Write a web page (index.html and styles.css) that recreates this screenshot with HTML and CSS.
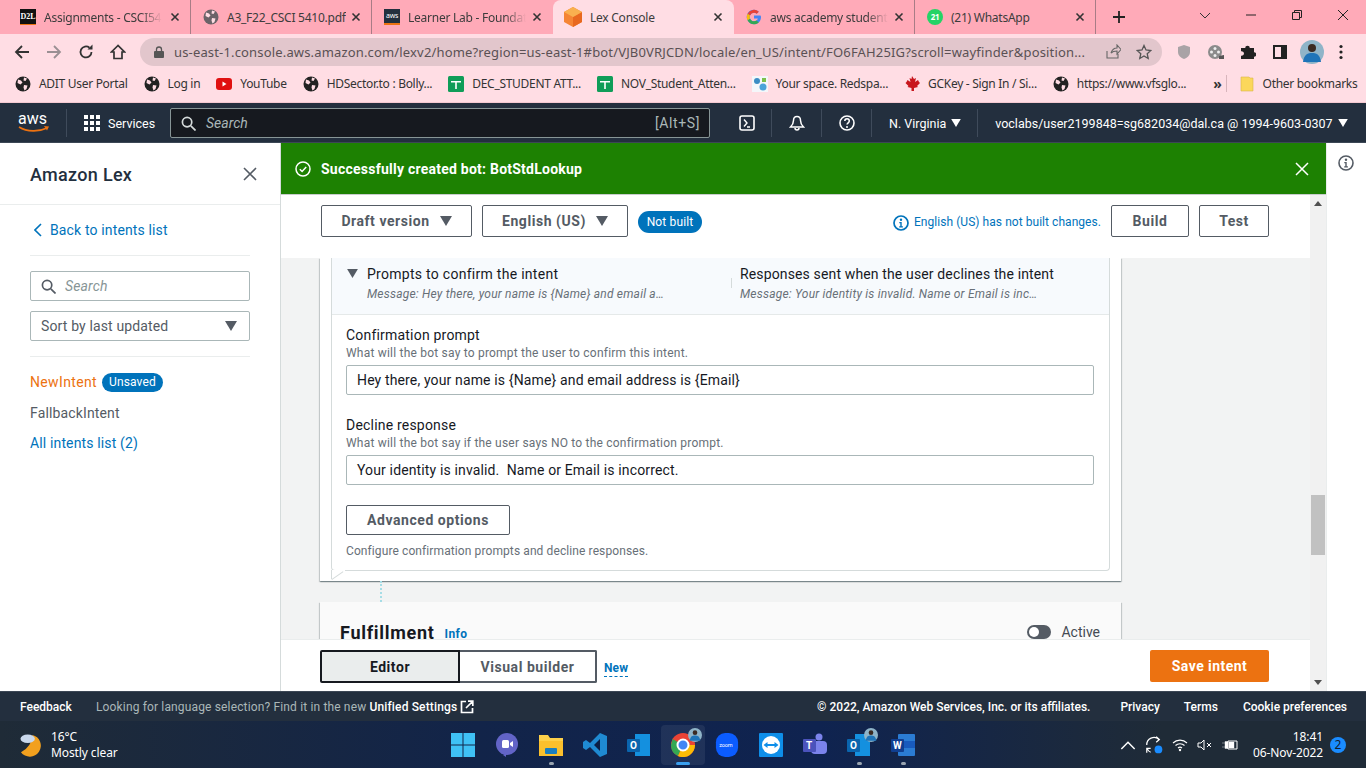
FILE: index.html
```html
<!DOCTYPE html>
<html lang="en">
<head>
    <meta charset="UTF-8">
    <title>Lex Console</title>
    <link rel="stylesheet" href="styles.css">
</head>
<body>
    <svg class="defs" width="0" height="0">
        <symbol id="globe" viewBox="0 0 16 16">
            <circle cx="8" cy="8" r="7.5" fill="currentColor"/>
            <path d="M3 3.5l3 1 1.5 2-2 2-3-1.5zM9 1.5l3 1-1.5 2.5-2-.5zM9 9l3.5 .5-1 3.5-2 1.5-1-3z" fill="#ffdde4"/>
        </symbol>
        <symbol id="sheet" viewBox="0 0 16 16">
            <rect width="16" height="16" rx="1.5" fill="#0f9d58"/>
            <path d="M3 5h10v1.600H8.800V13H7.200V6.600H3z" fill="#fff"/>
        </symbol>
        <symbol id="close" viewBox="0 0 10 10">
            <path d="M1.500 1.500l7 7M8.500 1.500l-7 7" stroke="currentColor" stroke-width="1.600" fill="none"/>
        </symbol>
        <symbol id="caret" viewBox="0 0 12 10">
            <path d="M0 0h12L6 10z" fill="currentColor"/>
        </symbol>
        <symbol id="avatar" viewBox="0 0 24 24">
            <circle cx="12" cy="12" r="12" fill="#8fb4c8"/>
            <circle cx="12" cy="8" r="4" fill="#3a2a22"/>
            <path d="M3 22c1-8 5-9 9-9s8 1 9 9z" fill="#1f74b8"/>
        </symbol>
    </svg>

    <!-- browser -->
    <div class="tabstrip">
        <div class="tab">
            <span class="favicon d2l">D2L</span>
            <span class="tab-title fade">Assignments - CSCI54</span>
            <svg class="tab-x"><use href="#close"/></svg>
        </div>
        <div class="tab">
            <svg class="favicon grey-globe"><use href="#globe"/></svg>
            <span class="tab-title">A3_F22_CSCI 5410.pdf</span>
            <svg class="tab-x"><use href="#close"/></svg>
        </div>
        <div class="tab">
            <span class="favicon aws-fav">aws</span>
            <span class="tab-title fade">Learner Lab - Foundat</span>
            <svg class="tab-x"><use href="#close"/></svg>
        </div>
        <div class="tab active">
            <svg class="favicon cube" viewBox="0 0 18 20">
                <path d="M9 0l9 5v10l-9 5-9-5V5z" fill="#f58534"/>
                <path d="M9 10l9-5v10l-9 5z" fill="#e8681f"/>
                <path d="M9 0l9 5-9 5-9-5z" fill="#f9b04f"/>
            </svg>
            <span class="tab-title">Lex Console</span>
            <svg class="tab-x"><use href="#close"/></svg>
        </div>
        <div class="tab">
            <svg class="favicon" viewBox="0 0 16 16">
                <path d="M14.500 6.600H8v2.900h3.800c-.4 1.700-1.900 2.700-3.800 2.700A4.200 4.200 0 0 1 8 3.800c1 0 2 .4 2.700 1l2.100-2.100A7.200 7.200 0 1 0 8 15.200c3.800 0 7-2.700 7-7.200 0-.5-.2-1-.5-1.400z" fill="#4285f4"/>
                <path d="M1.600 4.700l2.400 1.800A4.200 4.200 0 0 1 8 3.800c1 0 2 .4 2.700 1l2.100-2.100A7.200 7.200 0 0 0 1.600 4.700z" fill="#ea4335"/>
                <path d="M8 15.200c1.900 0 3.600-.7 4.800-1.800l-2.300-1.900c-.7.500-1.500.7-2.500.7a4.200 4.200 0 0 1-4-2.800l-2.400 1.900A7.200 7.200 0 0 0 8 15.200z" fill="#34a853"/>
                <path d="M1.600 11.300l2.400-1.900a4.200 4.200 0 0 1 0-2.900L1.600 4.700a7.200 7.200 0 0 0 0 6.600z" fill="#fbbc05"/>
            </svg>
            <span class="tab-title fade">aws academy student</span>
            <svg class="tab-x"><use href="#close"/></svg>
        </div>
        <div class="tab">
            <span class="favicon wa">21</span>
            <span class="tab-title">(21) WhatsApp</span>
            <svg class="tab-x"><use href="#close"/></svg>
        </div>
        <svg class="new-tab" viewBox="0 0 12 12"><path d="M6 0v12M0 6h12" stroke="#222" stroke-width="1.800"/></svg>
        <div class="window-btns">
            <svg viewBox="0 0 12 12"><path d="M1 4l5 5 5-5" stroke="#333" fill="none"/></svg>
            <svg viewBox="0 0 12 12"><path d="M1 6h10" stroke="#222"/></svg>
            <svg viewBox="0 0 12 12"><path d="M1.500 3.500h7v7h-7zM3.500 3.500v-2h7v7h-2" stroke="#222" fill="none"/></svg>
            <svg viewBox="0 0 12 12"><path d="M1 1l10 10M11 1L1 11" stroke="#222" fill="none"/></svg>
        </div>
    </div>

    <div class="toolbar">
        <svg class="tb-btn" viewBox="0 0 16 16"><path d="M15 8H2M8 2L2 8l6 6" stroke="#333" stroke-width="1.800" fill="none"/></svg>
        <svg class="tb-btn" viewBox="0 0 16 16"><path d="M1 8h13M8 2l6 6-6 6" stroke="#9a8f93" stroke-width="1.800" fill="none"/></svg>
        <svg class="tb-btn" viewBox="0 0 16 16"><path d="M13.500 8A5.500 5.500 0 1 1 11.500 3.700" stroke="#333" stroke-width="1.800" fill="none"/><path d="M9.500 5.500h5v-5z" fill="#333"/></svg>
        <svg class="tb-btn" viewBox="0 0 16 16"><path d="M8 1.500L1.500 8H4v6.500h8V8h2.500z" stroke="#333" stroke-width="1.700" fill="none"/></svg>
        <div class="omnibox">
            <svg class="lock" viewBox="0 0 10 12"><path d="M2.500 5V3.500a2.500 2.500 0 0 1 5 0V5" stroke="#555" stroke-width="1.300" fill="none"/><rect y="5" width="10" height="7" rx="1" fill="#555"/></svg>
            <span class="url">us-east-1.console.aws.amazon.com/lexv2/home?region=us-east-1#bot/VJB0VRJCDN/locale/en_US/intent/FO6FAH25IG?scroll=wayfinder&amp;position...</span>
            <svg class="omni-icon" viewBox="0 0 16 16"><path d="M2 7v7h11v-4M6 9c1-3 3-5 6-5V1l4 4.500L12 10V7C9 7 7 8 6 9z" stroke="#666" stroke-width="1.100" fill="none"/></svg>
            <svg class="omni-icon" viewBox="0 0 16 16"><path d="M8 1.500l2 4.500 4.800.5-3.600 3.200 1 4.800L8 12l-4.200 2.500 1-4.800L1.200 6.500 6 6z" stroke="#555" stroke-width="1.300" fill="none"/></svg>
        </div>
        <div class="ext-icons">
            <svg viewBox="0 0 16 16"><path d="M8 1l6 2v5c0 3.500-3 6-6 7-3-1-6-3.500-6-7V3z" fill="#a9a3a6"/></svg>
            <svg viewBox="0 0 16 16"><circle cx="7" cy="8" r="7" fill="#8b8b8b"/><circle cx="7" cy="4.500" r="1.500" fill="#eee"/><circle cx="7" cy="11.500" r="1.500" fill="#eee"/><circle cx="3.500" cy="8" r="1.500" fill="#eee"/><circle cx="10.500" cy="8" r="1.500" fill="#eee"/><path d="M11 12l5-1v4l-5 0z" fill="#555"/></svg>
            <svg viewBox="0 0 16 16"><path d="M1 4h4.200a2.300 2.300 0 1 1 4.600 0H14v4.200a2.300 2.300 0 1 1 0 4.600V15H1v-3.300a2.300 2.300 0 1 0 0-4.400z" fill="#222"/></svg>
            <svg viewBox="0 0 16 16"><path d="M1 1h14v14H1z" fill="#222"/><path d="M3 3h6v10H3z" fill="#ffdde4"/></svg>
            <svg class="avatar-icon"><use href="#avatar"/></svg>
            <svg class="dots" viewBox="0 0 4 16"><circle cx="2" cy="2.500" r="1.600" fill="#222"/><circle cx="2" cy="8" r="1.600" fill="#222"/><circle cx="2" cy="13.500" r="1.600" fill="#222"/></svg>
        </div>
    </div>

    <div class="bookmarks">
        <span class="bm"><svg class="bm-ico"><use href="#globe"/></svg>ADIT User Portal</span>
        <span class="bm"><svg class="bm-ico"><use href="#globe"/></svg>Log in</span>
        <span class="bm"><svg class="bm-ico" viewBox="0 0 16 16"><rect y="2" width="16" height="12" rx="3" fill="#e01010"/><path d="M6.500 5.500l4 2.500-4 2.500z" fill="#fff"/></svg>YouTube</span>
        <span class="bm"><svg class="bm-ico"><use href="#globe"/></svg>HDSector.to : Bolly...</span>
        <span class="bm"><svg class="bm-ico"><use href="#sheet"/></svg>DEC_STUDENT ATT...</span>
        <span class="bm"><svg class="bm-ico"><use href="#sheet"/></svg>NOV_Student_Atten...</span>
        <span class="bm"><svg class="bm-ico" viewBox="0 0 16 16"><rect width="16" height="16" fill="#f4f7fa"/><circle cx="5" cy="5" r="3" fill="#3b8dc4"/><circle cx="11" cy="11" r="3.500" fill="#4aa3d8"/><rect x="10" y="2" width="4" height="4" fill="#7cc04b"/></svg>Your space. Redspa...</span>
        <span class="bm"><svg class="bm-ico" viewBox="0 0 16 16"><path d="M8 0l2 3 2-1-1 4 3-2 1 2 1 1-3 3 1 1-4 1v3H7.500v-3l-4-1 1-1-3-3 1-1 1-2 3 2-1-4 2 1z" fill="#c8161d"/></svg>GCKey - Sign In / Si...</span>
        <span class="bm"><svg class="bm-ico"><use href="#globe"/></svg>https://www.vfsglo...</span>
        <span class="bm-more">»</span>
        <span class="bm other"><svg class="bm-ico" viewBox="0 0 16 16"><path d="M2 1h8l1 1h3v13H2z" fill="#fbd75b" stroke="#d9b64a" stroke-width=".6"/></svg>Other bookmarks</span>
    </div>

    <!-- aws console -->
    <nav class="aws-nav">
        <svg class="aws-logo" viewBox="0 0 32 22">
            <text x="0" y="12" class="aws-word">aws</text>
            <path d="M1 15c8 5 20 5 28 1" stroke="#ec7211" stroke-width="1.600" fill="none"/>
            <path d="M26 14l5 .5-2 4z" fill="#ec7211"/>
        </svg>
        <i class="nav-sep first"></i>
        <svg class="grid-ico" viewBox="0 0 16 16"><path d="M0 0h4v4H0zM6 0h4v4H6zM12 0h4v4h-4zM0 6h4v4H0zM6 6h4v4H6zM12 6h4v4h-4zM0 12h4v4H0zM6 12h4v4H6zM12 12h4v4h-4z" fill="#fff"/></svg>
        <span class="nav-services">Services</span>
        <div class="nav-search">
            <svg class="search-ico" viewBox="0 0 16 16"><circle cx="6.500" cy="6.500" r="5" stroke="#d5dbdb" stroke-width="1.800" fill="none"/><path d="M10.500 10.500l5 5" stroke="#d5dbdb" stroke-width="1.800"/></svg>
            <span class="search-ph">Search</span>
            <span class="search-key">[Alt+S]</span>
        </div>
        <svg class="nav-ico term" viewBox="0 0 16 16"><rect x="1" y="1" width="14" height="14" rx="2" stroke="#fff" stroke-width="1.600" fill="none"/><path d="M5 4.500l3 3.500-3 3.500M8 12h3" stroke="#fff" stroke-width="1.400" fill="none"/></svg>
        <i class="nav-sep"></i>
        <svg class="nav-ico" viewBox="0 0 16 16"><path d="M8 1.500c-2.500 0-3.500 2-3.500 4 0 3-1.500 5-3 6.500h13c-1.500-1.500-3-3.500-3-6.500 0-2-1-4-3.500-4zM6 13c0 2.500 4 2.500 4 0" stroke="#fff" stroke-width="1.500" fill="none"/></svg>
        <i class="nav-sep"></i>
        <svg class="nav-ico" viewBox="0 0 16 16"><circle cx="8" cy="8" r="7" stroke="#fff" stroke-width="1.600" fill="none"/><path d="M5.800 6c0-3 4.500-3 4.500 0 0 1.800-2.300 1.800-2.300 3.600" stroke="#fff" stroke-width="1.500" fill="none"/><circle cx="8" cy="12" r="1" fill="#fff"/></svg>
        <i class="nav-sep"></i>
        <span class="nav-menu region">N. Virginia <svg class="nav-caret"><use href="#caret"/></svg></span>
        <i class="nav-sep"></i>
        <span class="nav-menu account">voclabs/user2199848=sg682034@dal.ca @ 1994-9603-0307 <svg class="nav-caret"><use href="#caret"/></svg></span>
    </nav>

    <div class="console">
        <aside class="sidebar">
            <div class="side-head">
                <span>Amazon Lex</span>
                <svg class="side-x" viewBox="0 0 14 14"><path d="M1 1l12 12M13 1L1 13" stroke="#545b64" stroke-width="1.600"/></svg>
            </div>
            <div class="side-body">
                <a class="back-link">
                    <svg viewBox="0 0 8 14"><path d="M7 1L1 7l6 6" stroke="#0073bb" stroke-width="1.600" fill="none"/></svg>
                    Back to intents list
                </a>
                <hr class="side-rule">
                <div class="side-search">
                    <svg viewBox="0 0 16 16"><circle cx="6.500" cy="6.500" r="5" stroke="#545b64" stroke-width="1.800" fill="none"/><path d="M10.500 10.500l5 5" stroke="#545b64" stroke-width="1.800"/></svg>
                    <span>Search</span>
                </div>
                <div class="side-select">
                    <span>Sort by last updated</span>
                    <svg class="caret-ico"><use href="#caret"/></svg>
                </div>
                <hr class="side-rule">
                <div class="intent-row"><span class="intent-new">NewIntent</span><span class="badge">Unsaved</span></div>
                <div class="intent-row">FallbackIntent</div>
                <div class="intent-row intent-all">All intents list (2)</div>
            </div>
        </aside>

        <div class="center">
            <div class="flash">
                <svg class="flash-ok" viewBox="0 0 16 16"><circle cx="8" cy="8" r="7" stroke="#fff" stroke-width="1.500" fill="none"/><path d="M4.800 8.200l2.300 2.300 4.100-4.600" stroke="#fff" stroke-width="1.500" fill="none"/></svg>
                <span class="flash-text">Successfully created bot: BotStdLookup</span>
                <svg class="flash-x" viewBox="0 0 14 14"><path d="M1 1l12 12M13 1L1 13" stroke="#fff" stroke-width="1.500"/></svg>
            </div>
            <div class="center-row">
                <div class="center-col">
                    <div class="lex-bar">
                        <button class="btn select-btn draft">Draft version <svg class="caret-ico"><use href="#caret"/></svg></button>
                        <button class="btn select-btn lang">English (US) <svg class="caret-ico"><use href="#caret"/></svg></button>
                        <span class="badge not-built">Not built</span>
                        <svg class="info-ico" viewBox="0 0 16 16"><circle cx="8" cy="8" r="7" stroke="#0073bb" stroke-width="1.700" fill="none"/><circle cx="8" cy="4.800" r="1.200" fill="#0073bb"/><path d="M6.300 7h2.400v4.200h1.200v1.200H6.200v-1.200h1.100V8.200h-1z" fill="#0073bb"/></svg>
                        <span class="bar-note">English (US) has not built changes.</span>
                        <button class="btn build">Build</button>
                        <button class="btn test">Test</button>
                    </div>

                    <div class="scroll-area">
                        <section class="card">
                            <div class="prompt-box">
                                <div class="prompt-head">
                                    <div class="prompt-col first">
                                        <div class="prompt-title"><svg class="tri"><use href="#caret"/></svg>Prompts to confirm the intent</div>
                                        <div class="prompt-sub">Message: Hey there, your name is {Name} and email a…</div>
                                    </div>
                                    <div class="prompt-col second">
                                        <div class="prompt-title">Responses sent when the user declines the intent</div>
                                        <div class="prompt-sub">Message: Your identity is invalid. Name or Email is inc…</div>
                                    </div>
                                </div>
                                <div class="prompt-body">
                                    <div class="field first-field">
                                        <label>Confirmation prompt</label>
                                        <p class="hint">What will the bot say to prompt the user to confirm this intent.</p>
                                        <div class="text-input">Hey there, your name is {Name} and email address is {Email}</div>
                                    </div>
                                    <div class="field">
                                        <label>Decline response</label>
                                        <p class="hint">What will the bot say if the user says NO to the confirmation prompt.</p>
                                        <div class="text-input">Your identity is invalid.&nbsp; Name or Email is incorrect.</div>
                                    </div>
                                    <button class="btn advanced">Advanced options</button>
                                    <p class="hint config">Configure confirmation prompts and decline responses.</p>
                                </div>
                                <span class="notch"></span>
                            </div>
                        </section>
                        <div class="connector"></div>
                        <section class="card fulfillment">
                            <h2>Fulfillment</h2>
                            <a class="info-link">Info</a>
                            <span class="toggle"><i></i></span>
                            <span class="toggle-label">Active</span>
                        </section>
                    </div>

                    <div class="save-bar">
                        <div class="seg seg-on">Editor</div>
                        <div class="seg">Visual builder</div>
                        <a class="new-link">New</a>
                        <button class="save-btn">Save intent</button>
                    </div>
                </div>
                <div class="scrollbar">
                    <svg class="arrow" viewBox="0 0 8 5"><path d="M4 0l4 5H0z" fill="#505050"/></svg>
                    <div class="thumb"></div>
                    <svg class="arrow" viewBox="0 0 8 5"><path d="M0 0h8L4 5z" fill="#505050"/></svg>
                </div>
            </div>
        </div>

        <div class="rail">
            <svg viewBox="0 0 16 16"><circle cx="8" cy="8" r="7" stroke="#545b64" stroke-width="1.600" fill="none"/><circle cx="8" cy="4.800" r="1.200" fill="#545b64"/><path d="M6.300 7h2.400v4.200h1.200v1.200H6.200v-1.200h1.100V8.200h-1z" fill="#545b64"/></svg>
        </div>
    </div>

    <footer class="aws-foot">
        <span class="foot-feedback">Feedback</span>
        <span class="foot-note">Looking for language selection? Find it in the new <b>Unified Settings</b></span>
        <svg class="foot-ext" viewBox="0 0 14 14"><path d="M6 1.500H1.500v11h11V8M8 1.200h4.800V6M12.500 1.500L6 8" stroke="#fff" stroke-width="1.700" fill="none"/></svg>
        <span class="foot-copy">© 2022, Amazon Web Services, Inc. or its affiliates.</span>
        <span class="foot-link privacy">Privacy</span>
        <span class="foot-link terms">Terms</span>
        <span class="foot-link cookie">Cookie preferences</span>
    </footer>

    <!-- windows taskbar -->
    <div class="taskbar">
        <div class="weather">
            <svg viewBox="0 0 24 26">
                <path d="M13 3A11.500 11.500 0 1 1 1 21 A22 22 0 0 0 13 3z" fill="#f2a01e"/>
                <ellipse cx="8" cy="7" rx="7.500" ry="4.500" fill="#c9d8ec"/>
            </svg>
            <div class="weather-text"><span>16°C</span><span>Mostly clear</span></div>
        </div>
        <div class="task-icons">
            <span class="task"><svg viewBox="0 0 24 24"><path d="M0 0h11.500v11.500H0zM12.500 0H24v11.500H12.500zM0 12.500h11.500V24H0zM12.500 12.500H24V24H12.500z" fill="#3fc1f5"/></svg></span>
            <span class="task"><svg viewBox="0 0 24 24"><circle cx="12" cy="11" r="11" fill="#6264c7"/><path d="M8 22l3 2v-4z" fill="#6264c7"/><rect x="7" y="7" width="7" height="8" rx="1.500" fill="#fff"/><path d="M15 10l3-2v6l-3-2z" fill="#fff"/></svg></span>
            <span class="task running"><svg viewBox="0 0 24 24"><path d="M0 2h9l2 3h13v18H0z" fill="#fdd04a"/><rect y="8" width="24" height="15" fill="#fbc02d"/><rect x="6" y="15" width="12" height="6" rx="1" fill="#1a7fc0"/></svg></span>
            <span class="task"><svg viewBox="0 0 24 24"><path d="M17 0l7 3v18l-7 3L7 14l-4 3-3-2V9l3-2 4 3z" fill="#1f8ad2"/><path d="M17 6v12l-6-6z" fill="#0b1f45"/></svg></span>
            <span class="task"><svg viewBox="0 0 24 24"><rect x="8" y="1" width="15" height="22" fill="#1490df"/><rect x="0" y="6" width="13" height="13" rx="1" fill="#0a64ad"/><text x="3" y="16" class="tk-letter">O</text></svg></span>
            <span class="task active-app"><svg viewBox="0 0 24 24"><circle cx="12" cy="12" r="12" fill="#ea4335"/><path d="M12 12L1.600 6 0 12a12 12 0 0 0 7 11z" fill="#34a853"/><path d="M12 12l-5 11a12 12 0 0 0 17-11z" fill="#fbbc05"/><circle cx="12" cy="12" r="5.500" fill="#4285f4" stroke="#fff" stroke-width="2"/></svg><svg class="task-avatar"><use href="#avatar"/></svg></span>
            <span class="task"><svg viewBox="0 0 24 26"><rect width="24" height="26" rx="10" fill="#0b5cff"/><text x="3.500" y="15" class="tk-zoom">zoom</text></svg></span>
            <span class="task"><svg viewBox="0 0 24 24"><rect width="24" height="24" rx="1" fill="#0e8ee9"/><circle cx="12" cy="12" r="9" fill="#fff"/><path d="M4.500 12l4-3v2h7V9l4 3-4 3v-2h-7v2z" fill="#0e8ee9"/></svg></span>
            <span class="task"><svg viewBox="0 0 24 24"><circle cx="16" cy="4" r="3.500" fill="#7b83eb"/><rect x="8" y="8" width="16" height="13" rx="4" fill="#7b83eb"/><rect y="6" width="13" height="13" rx="1" fill="#4b53bc"/><text x="3" y="16" class="tk-letter">T</text></svg></span>
            <span class="task running"><svg viewBox="0 0 24 24"><rect x="8" y="1" width="15" height="22" fill="#1490df"/><rect x="0" y="6" width="13" height="13" rx="1" fill="#0a64ad"/><text x="3" y="16" class="tk-letter">O</text></svg><svg class="task-avatar"><use href="#avatar"/></svg></span>
            <span class="task running"><svg viewBox="0 0 24 24"><rect x="7" y="1" width="17" height="22" rx="1" fill="#2b7cd3"/><rect x="7" y="8" width="17" height="7" fill="#185abd"/><rect x="0" y="6" width="13" height="13" rx="1" fill="#103f91"/><text x="2" y="16" class="tk-letter">W</text></svg></span>
        </div>
        <div class="tray">
            <svg viewBox="0 0 12 8" class="tray-chev"><path d="M1 7l5-5 5 5" stroke="#fff" stroke-width="1.100" fill="none"/></svg>
            <svg class="tray-sync" viewBox="0 0 16 18"><path d="M1.500 9a6.500 6.500 0 0 1 11-5M10 1.500l2.800 2.600L10 6.500M2 12.500c.6 1.500 1.800 2.600 3 3M1.500 16v-4h3.500" stroke="#fff" stroke-width="1.100" fill="none"/><circle cx="12" cy="13" r="3.500" fill="#1a8cff"/></svg>
            <svg viewBox="0 0 16 14"><path d="M1 5a10 10 0 0 1 14 0M3.500 7.500a6.500 6.500 0 0 1 9 0M6 10a3 3 0 0 1 4 0" stroke="#fff" stroke-width="1.100" fill="none"/><circle cx="8" cy="12" r="1.200" fill="#fff"/></svg>
            <svg viewBox="0 0 16 14"><path d="M1 5h3l3-3v10L4 9H1zM10 5l4 4M14 5l-4 4" stroke="#fff" fill="none"/></svg>
            <svg viewBox="0 0 16 14"><path d="M6 3h9v8H6z" stroke="#fff" fill="none"/><path d="M7 4h5v6H7zM0 5h3M0 9h3M3 3.500h3v7H3z" stroke="#fff" stroke-width=".4" fill="#fff"/></svg>
            <div class="clock"><span>18:41</span><span>06-Nov-2022</span></div>
            <span class="notif">2</span>
        </div>
    </div>
</body>
</html>
```

FILE: styles.css
```css
* {
    box-sizing: border-box;
}
html, body {
    margin: 0;
    height: 768px;
    overflow: hidden;
}
body {
    font-family: Roboto, Arial, sans-serif;
    font-size: 14px;
    letter-spacing: 0.14px;
    color: #16191f;
    background-color: #fff;
    width: 1366px;
}
.defs {
    position: absolute;
}
svg {
    display: block;
    flex: none;
}

/* chrome tabs */
.tabstrip {
    height: 34px;
    display: flex;
    align-items: flex-end;
    padding-left: 10px;
    background-color: #ffaab8;
    font-family: "Noto Sans", Arial, sans-serif;
    letter-spacing: -0.25px;
}
.tab {
    width: 181px;
    height: 34px;
    display: flex;
    align-items: center;
    padding: 0 10px 0 12px;
    border-right: 1px solid #a87c86;
    font-size: 12px;
    color: #3c3c3c;
}
.tab:first-child {
    padding-left: 10px;
}
.tab:nth-child(3), .tab.active {
    border-right-color: transparent;
}
.tab.active {
    background-color: #ffdde4;
    border-radius: 8px 8px 0 0;
    padding-left: 11px;
}
.favicon {
    width: 16px;
    height: 16px;
    flex: none;
    margin-right: 8px;
}
.d2l {
    background-color: #111;
    color: #fff;
    font: bold 8px/16px "Liberation Serif", serif;
    letter-spacing: 0;
    text-align: center;
    border-bottom: 1px solid #ec7211;
}
.grey-globe {
    color: #6b6368;
}
.aws-fav {
    background-color: #232f3e;
    color: #fff;
    font-size: 7px;
    line-height: 14px;
    text-align: center;
    border-bottom: 2px solid #ec7211;
}
.cube {
    width: 18px;
    height: 20px;
}
.wa {
    background-color: #25d366;
    border-radius: 50%;
    color: #fff;
    font-size: 8px;
    font-weight: bold;
    line-height: 16px;
    text-align: center;
}
.tab-title {
    white-space: nowrap;
    overflow: hidden;
}
.tab-title.fade {
    width: 118px;
    -webkit-mask-image: linear-gradient(90deg, #000 82%, transparent);
    mask-image: linear-gradient(90deg, #000 82%, transparent);
}
.tab-x {
    width: 10px;
    height: 10px;
    margin-left: auto;
    color: #333;
}
.new-tab {
    width: 12px;
    height: 12px;
    margin: 0 0 11px 17px;
}
.window-btns {
    margin-left: auto;
    height: 34px;
    display: flex;
    gap: 34px;
    padding: 9px 17px 0 0;
}
.window-btns svg {
    width: 12px;
    height: 12px;
}

/* chrome toolbar */
.toolbar {
    height: 34px;
    display: flex;
    align-items: center;
    padding: 2px 0 0 14px;
    background-color: #ffdde4;
}
.tb-btn {
    width: 16px;
    height: 16px;
    margin-right: 16px;
}
.omnibox {
    width: 1022px;
    height: 28px;
    margin-left: -2px;
    display: flex;
    align-items: center;
    padding: 0 10px 0 14px;
    background-color: #e2c6cc;
    border-radius: 14px;
    font-family: "Noto Sans", Arial, sans-serif;
    font-size: 13px;
}
.lock {
    width: 10px;
    height: 12px;
    margin-right: 10px;
}
.url {
    flex: 1;
    white-space: nowrap;
    overflow: hidden;
    color: #5a5154;
    letter-spacing: 0.16px;
}
.omni-icon {
    width: 16px;
    height: 16px;
    margin-left: 15px;
}
.ext-icons {
    display: flex;
    align-items: center;
    gap: 16px;
    margin-left: 14px;
}
.ext-icons svg {
    width: 16px;
    height: 16px;
}
.ext-icons .avatar-icon {
    width: 24px;
    height: 24px;
    margin: 0 -4px;
}
.ext-icons .dots {
    width: 4px;
    height: 16px;
    margin-left: 3px;
}

/* bookmarks */
.bookmarks {
    height: 35px;
    display: flex;
    align-items: center;
    padding: 0 0 3px 15px;
    background-color: #ffdde4;
    border-bottom: 1px solid #f3c9d1;
    font-family: "Noto Sans", Arial, sans-serif;
    font-size: 12px;
    color: #333;
    letter-spacing: -0.3px;
    white-space: nowrap;
}
.bm {
    display: flex;
    align-items: center;
    gap: 8px;
    margin-right: 16px;
}
.bm-ico {
    width: 16px;
    height: 16px;
    color: #222;
}
.bm-more {
    margin-left: 11px;
    font-weight: bold;
    font-size: 14px;
}
.bm.other {
    margin: 0 0 0 4px;
    padding-left: 12px;
    border-left: 1px solid #d8b5bc;
}

/* aws top nav */
.aws-nav {
    height: 40px;
    display: flex;
    align-items: center;
    padding: 1px 0 0 18px;
    background-color: #232f3e;
    color: #fff;
    font-size: 12.5px;
    letter-spacing: 0;
    border-bottom: 1px solid #3c4755;
}
.aws-logo {
    width: 32px;
    height: 22px;
    overflow: visible;
}
.aws-word {
    font: 16px Roboto, sans-serif;
    fill: #fff;
}
.nav-sep {
    flex: none;
    width: 1px;
    height: 28px;
    margin: 0 17px 0 16px;
    background-color: #3f4b5b;
}
.grid-ico {
    width: 16px;
    height: 16px;
    margin-right: 8px;
}
.nav-services {
    width: 62px;
    flex: none;
}
.nav-search {
    width: 540px;
    flex: none;
    height: 30px;
    display: flex;
    align-items: center;
    padding: 0 9px 0 10px;
    margin-right: 29px;
    background-color: #16191f;
    border: 1px solid #879596;
    border-radius: 2px;
}
.search-ico {
    width: 15px;
    height: 15px;
    margin-right: 10px;
}
.search-ph {
    flex: 1;
    color: #aab7b8;
    font-style: italic;
    font-size: 14px;
}
.search-key {
    color: #aab7b8;
    font-size: 14px;
    letter-spacing: 0.6px;
}
.nav-ico {
    width: 16px;
    height: 16px;
}
.nav-menu {
    display: flex;
    align-items: center;
    gap: 5px;
    white-space: nowrap;
}
.nav-caret {
    width: 10px;
    height: 8px;
    color: #fff;
}

/* console layout */
.console {
    height: 548px;
    display: flex;
    background-color: #f2f3f3;
}
.sidebar {
    width: 281px;
    background-color: #fff;
    border-right: 1px solid #d5dbdb;
    flex: none;
}
.side-head {
    height: 62px;
    display: flex;
    align-items: center;
    justify-content: space-between;
    padding: 1px 23px 0 30px;
    border-bottom: 1px solid #eaeded;
    font-size: 18px;
    font-weight: 500;
    letter-spacing: 0.3px;
    color: #232f3e;
}
.side-x {
    width: 14px;
    height: 14px;
}
.side-body {
    padding: 0 30px;
}
.back-link {
    height: 50px;
    display: flex;
    align-items: center;
    gap: 8px;
    padding: 0 0 0 4px;
    color: #0073bb;
}
.back-link svg {
    width: 8px;
    height: 14px;
}
.side-rule {
    margin: 0;
    border: none;
    border-top: 1px solid #eaeded;
}
.side-search {
    height: 30px;
    display: flex;
    align-items: center;
    gap: 9px;
    margin-top: 15px;
    padding-left: 10px;
    border: 1px solid #aab7b8;
    border-radius: 2px;
    color: #879596;
    font-style: italic;
}
.side-search svg {
    width: 15px;
    height: 15px;
}
.side-select {
    height: 30px;
    display: flex;
    align-items: center;
    justify-content: space-between;
    margin: 10px 0 15px;
    padding: 0 12px 0 10px;
    border: 1px solid #aab7b8;
    border-radius: 2px;
    color: #545b64;
}
.caret-ico {
    width: 12px;
    height: 10px;
    color: #545b64;
}
.intent-row {
    height: 30.5px;
    display: flex;
    align-items: center;
    gap: 5px;
    color: #545b64;
}
.side-rule + .intent-row {
    margin-top: 10px;
}
.intent-new {
    color: #ec7211;
    letter-spacing: 0.35px;
}
.intent-all {
    color: #0073bb;
}
.badge {
    display: inline-block;
    width: 61px;
    height: 19px;
    line-height: 19px;
    text-align: center;
    border-radius: 10px;
    background-color: #0073bb;
    color: #fff;
    font-size: 12px;
}

/* flash + sticky bar */
.center {
    flex: 1;
    display: flex;
    flex-direction: column;
    min-width: 0;
}
.flash {
    height: 52px;
    display: flex;
    align-items: center;
    padding: 0 17px 0 14px;
    background-color: #1d8102;
    border-bottom: 1px solid #c7cccc;
    color: #fff;
    font-weight: 700;
    letter-spacing: 0.24px;
}
.flash-ok {
    width: 16px;
    height: 16px;
    margin-right: 10px;
}
.flash-text {
    flex: 1;
}
.flash-x {
    width: 14px;
    height: 14px;
}
.center-row {
    flex: 1;
    display: flex;
    min-height: 0;
}
.center-col {
    flex: 1;
    display: flex;
    flex-direction: column;
    min-width: 0;
}
.lex-bar {
    height: 63px;
    flex: none;
    display: flex;
    align-items: flex-start;
    padding: 10px 41px 0 40px;
    background-color: #fff;
    font-size: 12px;
}
.btn {
    height: 32px;
    font-family: inherit;
    font-size: 14px;
    font-weight: 700;
    letter-spacing: 0.55px;
    color: #545b64;
    background-color: #fff;
    border: 1px solid #545b64;
    border-radius: 2px;
    padding: 0;
}
.select-btn {
    display: flex;
    align-items: center;
    justify-content: center;
    gap: 10px;
    margin-right: 10px;
}
.draft {
    width: 151px;
}
.lang {
    width: 146px;
}
.not-built {
    height: 22px;
    line-height: 22px;
    margin-top: 6px;
    width: 64px;
    border-radius: 11px;
}
.info-ico {
    width: 16px;
    height: 16px;
    margin: 10px 5px 0 auto;
}
.bar-note {
    margin-top: 10px;
    color: #0073bb;
    width: 187px;
    letter-spacing: 0.05px;
    white-space: nowrap;
}
.build {
    width: 78px;
    margin-left: 10px;
}
.test {
    width: 70px;
    margin-left: 10px;
}

/* scrolled form */
.scroll-area {
    flex: 1;
    min-height: 0;
    overflow: hidden;
    padding: 0 0 0 39px;
}
.card {
    width: 801px;
    background-color: #fff;
    box-shadow: 0 1px 1px 0 rgba(0,28,36,.3), 1px 1px 1px 0 rgba(0,28,36,.15), -1px 1px 1px 0 rgba(0,28,36,.15);
    padding: 0 11px 10px 11px;
}
.prompt-box {
    position: relative;
    border: 1px solid #d5dbdb;
    border-top: none;
    border-radius: 0 0 4px 4px;
}
.prompt-head {
    height: 57px;
    display: flex;
    background-color: #f7fafd;
    border-bottom: 1px solid #e5e9e9;
}
.prompt-col {
    padding-top: 6px;
}
.prompt-col.first {
    width: 399px;
    padding-left: 15px;
}
.prompt-col.second {
    padding-left: 9px;
    position: relative;
}
.prompt-col.second::before {
    content: "";
    position: absolute;
    left: 0;
    top: 20px;
    height: 10px;
    border-left: 1px solid #d5dbdb;
}
.prompt-title {
    display: flex;
    align-items: center;
    color: #16191f;
    height: 19px;
    white-space: nowrap;
}
.prompt-col.first .prompt-title {
    letter-spacing: 0.28px;
}
.tri {
    width: 11px;
    height: 9px;
    margin-right: 9px;
    color: #545b64;
}
.prompt-sub {
    margin-top: 3px;
    font-size: 12px;
    line-height: 16px;
    font-style: italic;
    letter-spacing: 0.2px;
    color: #687078;
    white-space: nowrap;
}
.prompt-col.first .prompt-sub {
    padding-left: 20px;
}
.prompt-body {
    padding: 12px 14px 11px;
}
.field {
    margin-bottom: 20px;
}
.field.first-field {
    margin-bottom: 22px;
}
.field label {
    display: block;
    line-height: 17px;
    letter-spacing: 0.2px;
    color: #16191f;
}
.hint {
    margin: 2px 0 0;
    font-size: 12px;
    line-height: 15px;
    letter-spacing: 0.21px;
    color: #687078;
}
.text-input {
    height: 30px;
    margin-top: 4px;
    padding-left: 10px;
    line-height: 28px;
    border: 1px solid #aab7b8;
    border-radius: 2px;
    color: #16191f;
    width: 748px;
}
.advanced {
    display: block;
    width: 164px;
    height: 30px;
}
.hint.config {
    margin-top: 9px;
    letter-spacing: 0.1px;
}
.notch {
    position: absolute;
    left: -1px;
    bottom: -9px;
    width: 14px;
    height: 9px;
    background-color: #fff;
    border-left: 1px solid #d5dbdb;
}
.notch::after {
    content: "";
    position: absolute;
    left: 0;
    top: 0;
    width: 14px;
    border-top: 1px solid #d5dbdb;
    transform-origin: left bottom;
    transform: translateY(9px) rotate(-35deg);
}
.connector {
    width: 2px;
    height: 21px;
    margin-left: 60px;
    border-left: 2px dotted #a6dde6;
}
.fulfillment {
    position: relative;
    height: 60px;
    padding: 0;
    display: flex;
    align-items: flex-start;
    background-color: #fafafa;
}
.fulfillment h2 {
    margin: 20px 0 0 20px;
    font-size: 18px;
    line-height: 22px;
    font-weight: 700;
    letter-spacing: 0.7px;
}
.info-link {
    margin: 25px 0 0 10px;
    font-size: 12px;
    font-weight: 700;
    letter-spacing: 0.4px;
    color: #0073bb;
}
.toggle {
    width: 24px;
    height: 14px;
    margin: 23px 0 0 auto;
    background-color: #545b64;
    border-radius: 7px;
    padding: 2px;
}
.toggle i {
    display: block;
    width: 10px;
    height: 10px;
    border-radius: 50%;
    background-color: #fff;
}
.toggle-label {
    margin: 22px 21px 0 10px;
    letter-spacing: 0;
    color: #444b54;
}

/* bottom bar */
.save-bar {
    height: 52px;
    flex: none;
    display: flex;
    align-items: flex-start;
    padding: 10px 41px 0 39px;
    background-color: #fff;
    border-top: 1px solid #eaeded;
}
.seg {
    width: 137px;
    height: 33px;
    line-height: 31px;
    text-align: center;
    font-weight: 700;
    letter-spacing: 0.55px;
    color: #545b64;
    border: 2px solid #545b64;
    border-left: none;
    border-radius: 0 2px 2px 0;
}
.seg-on {
    width: 140px;
    color: #16191f;
    background-color: #eaeded;
    border: 2px solid #16191f;
    border-radius: 2px 0 0 2px;
}
.new-link {
    margin: 10px 0 0 7px;
    font-size: 12px;
    line-height: 16px;
    font-weight: 700;
    color: #0073bb;
    border-bottom: 1px dashed #0073bb;
}
.save-btn {
    width: 119px;
    height: 32px;
    margin-left: auto;
    font-family: inherit;
    font-size: 14px;
    font-weight: 700;
    letter-spacing: 0.45px;
    color: #fff;
    background-color: #ec7211;
    border: none;
    border-radius: 2px;
}

/* page scrollbar + right rail */
.scrollbar {
    width: 16px;
    display: flex;
    flex-direction: column;
    align-items: center;
    background-color: #f1f1f1;
    padding: 6px 0;
}
.arrow {
    width: 8px;
    height: 5px;
}
.thumb {
    width: 14px;
    height: 60px;
    margin: 289px 0 auto;
    background-color: #c1c1c1;
}
.rail {
    width: 40px;
    flex: none;
    padding: 12px 0 0 11px;
    background-color: #fff;
    border-left: 1px solid #eaeded;
}
.rail svg {
    width: 16px;
    height: 16px;
}

/* aws footer */
.aws-foot {
    height: 30px;
    display: flex;
    align-items: center;
    padding-left: 20px;
    background-color: #232f3e;
    color: #fff;
    font-size: 12px;
    letter-spacing: 0;
    border-top: 1px solid #3c4755;
    white-space: nowrap;
}
.foot-feedback {
    width: 76px;
    font-weight: 500;
}
.foot-note {
    color: #aab7b8;
    letter-spacing: 0.15px;
}
.foot-note b {
    color: #fff;
    font-weight: 500;
}
.foot-ext {
    width: 14px;
    height: 14px;
    margin-left: 3px;
}
.foot-copy {
    margin-left: auto;
    font-weight: 500;
}
.foot-link {
    font-weight: 500;
}
.privacy {
    margin-left: 30px;
}
.terms {
    margin-left: 24px;
}
.cookie {
    margin: 0 19px 0 25px;
}

/* windows taskbar */
.taskbar {
    height: 47px;
    display: flex;
    align-items: center;
    padding-left: 20px;
    background: linear-gradient(90deg, #1f2b37 0%, #122449 35%, #0f2350 60%, #1f2b37 85%);
    color: #fff;
    font-family: "Noto Sans", Arial, sans-serif;
    font-size: 12px;
    letter-spacing: -0.1px;
}
.weather {
    display: flex;
    align-items: center;
    gap: 8px;
    width: 421px;
}
.weather svg {
    width: 23px;
    height: 25px;
}
.weather-text, .clock {
    display: flex;
    flex-direction: column;
    line-height: 16px;
}
.task-icons {
    display: flex;
}
.task {
    position: relative;
    width: 44px;
    height: 40px;
    display: flex;
    align-items: center;
    justify-content: center;
}
.task svg {
    width: 24px;
    height: 24px;
}
.task .task-avatar {
    position: absolute;
    top: 3px;
    right: 3px;
    width: 14px;
    height: 14px;
}
.task.running::after {
    content: "";
    position: absolute;
    bottom: 0;
    left: 20px;
    width: 5px;
    height: 3px;
    border-radius: 2px;
    background-color: #9aa5b1;
}
.active-app {
    background-color: rgba(255,255,255,.07);
    border-radius: 4px;
}
.active-app::after {
    content: "";
    position: absolute;
    bottom: 0;
    left: 15px;
    width: 14px;
    height: 3px;
    border-radius: 2px;
    background-color: #3aa0f0;
}
.tk-letter {
    font: bold 10px Roboto, sans-serif;
    fill: #fff;
}
.tk-zoom {
    font: 6px Roboto, sans-serif;
    fill: #fff;
}
.tray {
    margin-left: auto;
    display: flex;
    align-items: center;
    gap: 9px;
    padding-right: 20px;
}
.tray svg {
    width: 16px;
    height: 16px;
}
.tray .tray-sync {
    width: 18px;
    height: 20px;
}
.clock {
    align-items: flex-end;
    margin-left: 6px;
}
.notif {
    width: 16px;
    height: 16px;
    margin-left: -2px;
    line-height: 16px;
    text-align: center;
    border-radius: 50%;
    background-color: #1a8cff;
    color: #10202f;
}
```
